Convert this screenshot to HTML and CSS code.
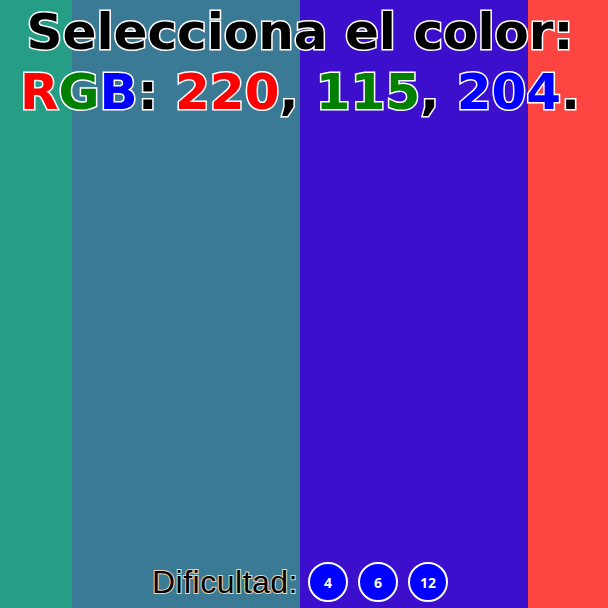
FILE: index.html
```html
<!DOCTYPE html>
<html lang="es">
<head>
<meta charset="utf-8">
<title>Selecciona el color</title>
<link rel="stylesheet" href="styles.css">
</head>
<body>
<div class="stage">
  <div class="columns">
    <div class="col c1"></div>
    <div class="col c2"></div>
    <div class="col c3"></div>
    <div class="col c4"></div>
  </div>
  <div class="overlay">
    <h1 class="title">
      <span class="line">Selecciona el color:</span>
      <span class="line"><span class="r">R</span><span class="g">G</span><span class="b">B</span>: <span class="r">220</span>, <span class="g">115</span>, <span class="b">204</span>.</span>
    </h1>
    <div class="difficulty">
      <span class="label">Dificultad:</span>
      <button class="level">4</button>
      <button class="level">6</button>
      <button class="level">12</button>
    </div>
  </div>
</div>
</body>
</html>
```
FILE: styles.css
```css
html, body {
  margin: 0;
  padding: 0;
}
.stage {
  position: relative;
  width: 608px;
  height: 608px;
  overflow: hidden;
}
.columns {
  display: grid;
  grid-template-columns: 72px 228px 228px 80px;
  height: 100%;
}
.c1 { background: #259e85; }
.c2 { background: #3a7a94; }
.c3 { background: #3c0fcc; }
.c4 { background: #fc4541; }

.overlay {
  position: absolute;
  inset: 0;
  padding-right: 8px;
  display: flex;
  flex-direction: column;
  justify-content: space-between;
  align-items: center;
}
.title {
  margin: 0;
  padding-top: 2px;
  font-family: "DejaVu Sans", sans-serif;
  font-weight: bold;
  font-size: 50px;
  line-height: 60px;
  text-align: center;
  color: #000;
  -webkit-text-stroke: 3px #fff;
  paint-order: stroke fill;
}
.line { display: block; white-space: nowrap; }
.r { color: #ff0000; }
.g { color: #008000; }
.b { color: #0000ff; }

.difficulty {
  display: flex;
  align-items: center;
  gap: 10px;
  padding: 0 0 6px 0;
}
.label {
  font-family: "Liberation Sans", Arial, sans-serif;
  font-size: 32px;
  letter-spacing: 0.5px;
  line-height: 34px;
  color: #000;
  -webkit-text-stroke: 2px #f0d8b4;
  paint-order: stroke fill;
}
.level {
  width: 40px;
  height: 40px;
  border-radius: 50%;
  border: 2px solid #fff;
  background: #0000ff;
  color: #fff;
  font-family: "Open Sans", sans-serif;
  font-weight: bold;
  font-size: 14px;
  padding: 0;
  display: flex;
  align-items: center;
  justify-content: center;
}
```
